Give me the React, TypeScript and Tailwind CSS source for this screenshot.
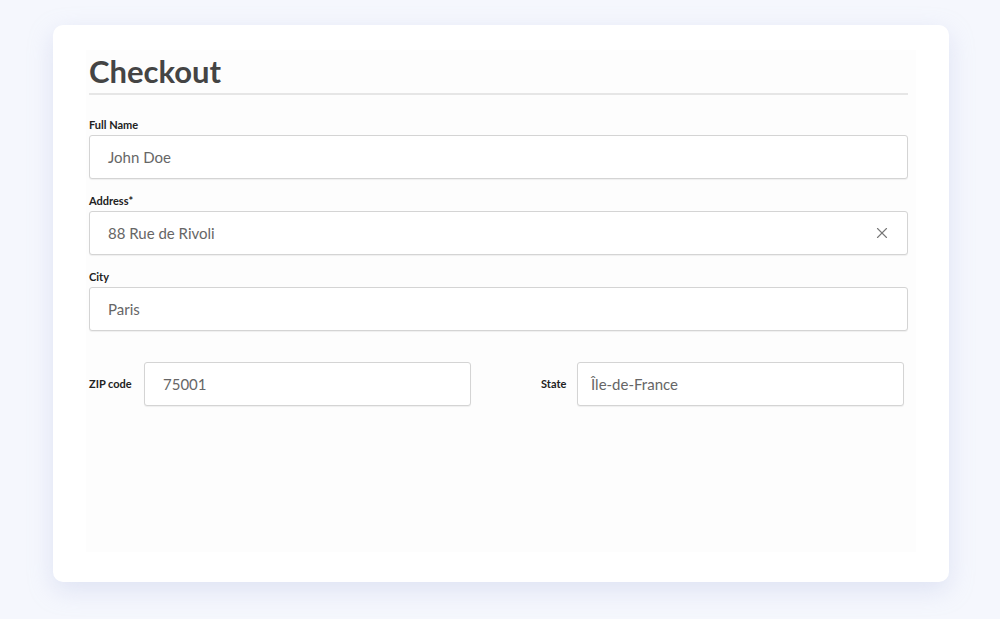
import { X } from "lucide-react";

function Field({ label, value, clear }: { label: string; value: string; clear?: boolean }) {
  return (
    <div className="flex flex-col">
      <label className="text-[11px] font-bold text-[#222] leading-[14px] mb-[3px]">{label}</label>
      <div className="h-[44px] border border-[#d4d4d4] rounded-[3px] bg-white flex items-center px-[18px] shadow-[0_1px_1px_rgba(0,0,0,0.06)]">
        <span className="flex-1 text-[15px] text-[#666]">{value}</span>
        {clear && <X size={18} strokeWidth={1.5} className="text-[#777] -mr-[2px]" />}
      </div>
    </div>
  );
}

export default function App() {
  return (
    <div className="w-[1000px] h-[619px] bg-[#f5f7fd] pt-[25px] pl-[53px]" style={{ fontFamily: "Lato, 'Open Sans', sans-serif" }}>
      <div className="w-[896px] h-[557px] bg-white rounded-[10px] shadow-[0_8px_24px_rgba(180,190,225,0.35)] px-[33px] pt-[25px]">
        <div className="bg-[#fdfdfd] h-[502px] px-[3px]">
          <h1 className="text-[31px] font-bold text-[#444] leading-[40px] pt-[1px] pb-[2px] border-b-2 border-[#e6e6e6] w-[819px]">Checkout</h1>
          <div className="w-[819px] flex flex-col gap-[15px] mt-[23px]">
            <Field label="Full Name" value="John Doe" />
            <Field label="Address*" value="88 Rue de Rivoli" clear />
            <Field label="City" value="Paris" />
          </div>
          <div className="w-[819px] flex items-center mt-[31px]">
            <div className="flex items-center">
              <span className="text-[11px] font-bold text-[#222] w-[55px]">ZIP code</span>
              <div className="h-[44px] w-[327px] border border-[#d4d4d4] rounded-[3px] bg-white flex items-center px-[18px] text-[15px] text-[#666] shadow-[0_1px_1px_rgba(0,0,0,0.06)]">75001</div>
            </div>
            <div className="flex items-center ml-[70px]">
              <span className="text-[11px] font-bold text-[#222] w-[36px]">State</span>
              <div className="h-[44px] w-[327px] border border-[#d4d4d4] rounded-[3px] bg-white flex items-center px-[13px] text-[15px] text-[#666] shadow-[0_1px_1px_rgba(0,0,0,0.06)]">Île-de-France</div>
            </div>
          </div>
        </div>
      </div>
    </div>
  );
}
